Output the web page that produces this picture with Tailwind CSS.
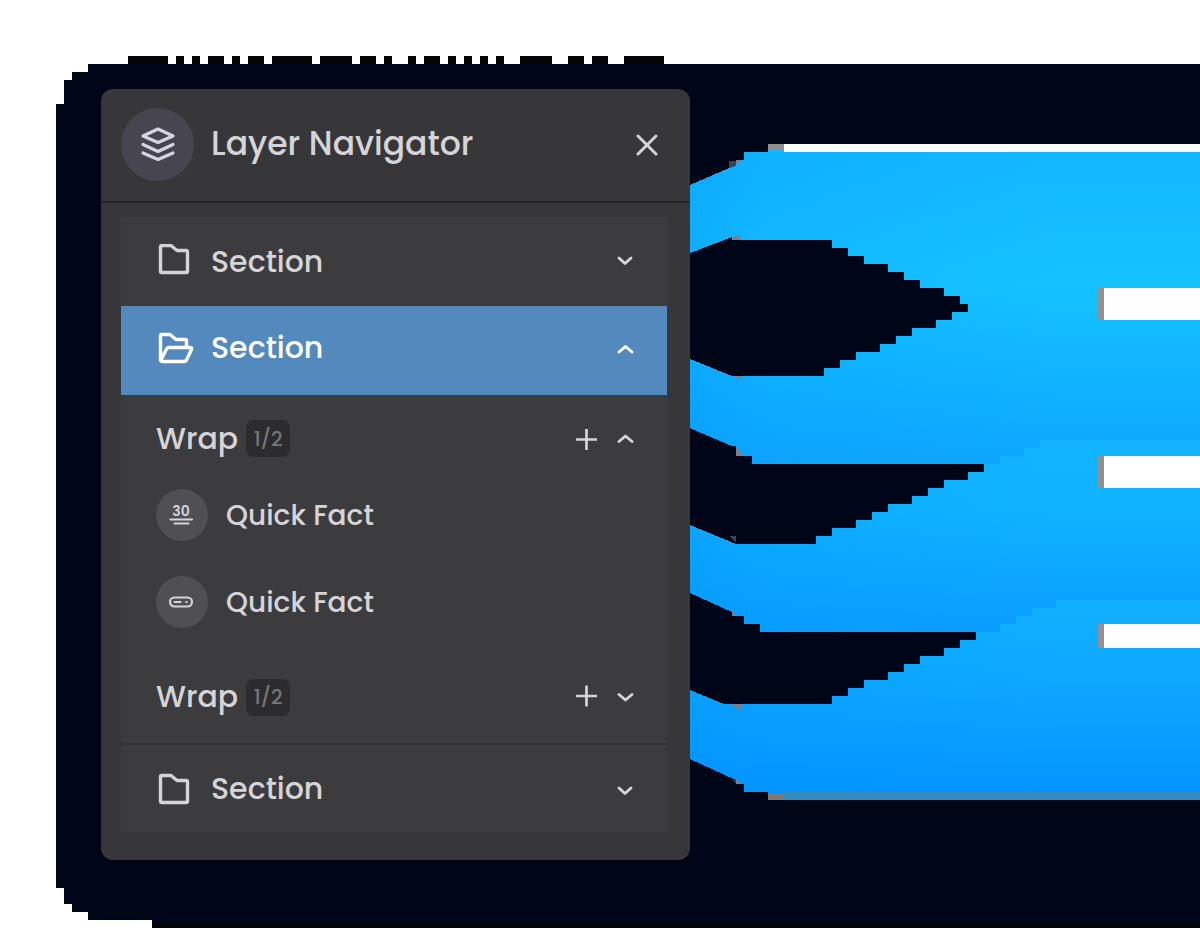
<!DOCTYPE html>
<html lang="en">
<head>
<meta charset="utf-8">
<meta name="viewport" content="width=device-width, initial-scale=1">
<title>Layer Navigator</title>
<script src="https://cdn.jsdelivr.net/npm/@tailwindcss/browser@4"></script>
</head>
<body class="bg-white font-['Poppins','Inter',sans-serif] font-medium text-[#d5d4d8]">
<main class="relative min-h-screen overflow-hidden pt-[89px] pr-4 pb-[90px] pl-[101px]">
  <!-- Decorative backdrop -->
  <svg class="absolute top-0 left-0 h-[950px] w-[2400px] max-w-none" viewBox="0 0 2400 950" aria-hidden="true" shape-rendering="crispEdges">
    <defs>
      <linearGradient id="g1" gradientUnits="userSpaceOnUse" x1="1020" y1="152" x2="1020" y2="464">
        <stop offset="0" stop-color="#13b7ff"/><stop offset=".42" stop-color="#15c2ff"/><stop offset="1" stop-color="#0da6ff"/>
      </linearGradient>
      <linearGradient id="g2" gradientUnits="userSpaceOnUse" x1="1000" y1="440" x2="1000" y2="632">
        <stop offset="0" stop-color="#12b4ff"/><stop offset=".35" stop-color="#10b3ff"/><stop offset="1" stop-color="#099dff"/>
      </linearGradient>
      <linearGradient id="g3" gradientUnits="userSpaceOnUse" x1="1000" y1="600" x2="1000" y2="792">
        <stop offset="0" stop-color="#11b0ff"/><stop offset=".4" stop-color="#0da8ff"/><stop offset="1" stop-color="#0494ff"/>
      </linearGradient>
      <linearGradient id="shade" gradientUnits="userSpaceOnUse" x1="690" y1="0" x2="1060" y2="0">
        <stop offset="0" stop-color="#0090f8" stop-opacity=".34"/><stop offset=".2" stop-color="#0094ff" stop-opacity=".18"/><stop offset="1" stop-color="#0098ff" stop-opacity="0"/>
      </linearGradient>
    </defs>
    <path fill="#000517" d="M88 64H2400V928H152V920H88V912H72V904H64V888H56V104H64V80H72V72H88Z"/>
    <path fill="#050505" d="M128 56h40v8h-40zM176 56h8v8h-8zM192 56h8v8h-8zM208 56h16v8h-16zM232 56h8v8h-8zM248 56h16v8h-16zM272 56h40v8h-40zM320 56h32v8h-32zM360 56h16v8h-16zM384 56h8v8h-8zM408 56h8v8h-8zM424 56h16v8h-16zM448 56h8v8h-8zM464 56h8v8h-8zM480 56h8v8h-8zM496 56h8v8h-8zM520 56h32v8h-32zM568 56h16v8h-16zM592 56h16v8h-16zM624 56h40v8h-40zM152 924H2400v4H152z"/>
    <path fill="url(#g1)" d="M690 185L736 165V160H744V152H2400V464H690Z"/>
    <path fill="url(#g2)" d="M690 464H1000V456H1024V448H1040V440H2400V632H690Z"/>
    <path fill="url(#g3)" d="M690 632H1000V624H1016V616H1032V608H1056V600H2400V792H744V784H736V780L690 759Z"/>
    <path fill="url(#shade)" d="M690 185L736 165V160H744V152H1060V792H744V784H736V780L690 759Z"/>
    <g fill="#000517">
      <path d="M690 253L732 237V240H832V248H848V256H864V264H888V272H904V280H920V288H944V296H960V304H968V312H952V320H936V328H912V336H896V344H880V352H856V360H840V368H824V376H732L690 359Z"/>
      <path d="M690 428L732 446H736V456H752V464H984V472H968V480H944V488H928V496H912V504H888V512H872V520H856V528H832V536H816V544H736L690 525Z"/>
      <path d="M690 593L732 612V616H744V624H760V632H976V640H960V648H944V656H920V664H904V672H888V680H864V688H848V696H832V704H724L690 690Z"/>
    </g>
    <path fill="#7d7b8d" d="M736 160h6l-6 4zM733 237l7-3v6h-7zM734 376h7v3zM736 448l5 3v5h-5zM732 614v-3l4 2v3zM730 704h11v6zM736 779l5 5h-5z"/>
    <path fill="#3a4454" d="M729 161h7v5l-7 2zM729 536h7v7zM730 778l6 3v3z"/>
    <path fill="#fff" d="M784 144H2400v8H784zM1104 288H2400v32H1104zM1104 456H2400v32H1104zM1104 624H2400v24H1104z"/>
    <path fill="#919191" d="M768 144h16v6h-16zM1098 288h6v32h-6zM1098 456h6v32h-6zM1098 624h6v24h-6z"/>
    <path fill="#13b7ff" d="M768 150h16v2h-16z"/>
    <path fill="#338bc1" d="M784 792H2400v8H784z"/><path fill="#7d7978" d="M768 794h16v6h-16z"/><path fill="#0494ff" d="M768 792h16v2h-16z"/>
  </svg>

  <section aria-labelledby="title" class="relative w-full max-w-[589px] rounded-xl bg-[#373739] pb-7">
    <header class="flex h-[114px] items-center border-b-2 border-[#252527] pr-7 pb-0.5 pl-5">
      <span class="flex size-[73px] items-center justify-center rounded-full bg-[#474550]">
        <svg class="size-9" viewBox="0 0 36 36" fill="none" stroke="#d5d4e0" stroke-width="3.200" stroke-linejoin="round" stroke-linecap="round" aria-hidden="true"><path d="M18 3L33 10L18 16.500L3 10ZM3 18.500L18 25.500L33 18.500M3 27L18 33.500L33 27"/></svg>
      </span>
      <h1 id="title" class="ml-[17px] flex-1 text-[33px] leading-10">Layer Navigator</h1>
      <button type="button" aria-label="Close" class="flex size-8 items-center justify-center">
        <svg class="size-6" viewBox="0 0 24 24" fill="none" stroke="currentColor" stroke-width="3" stroke-linecap="round"><path d="M4 4L22 22M22 4L4 22"/></svg>
      </button>
    </header>

    <div class="mt-3.5 mr-[23px] ml-5 bg-[#3c3c3e] text-[30px] leading-10">
      <button type="button" aria-expanded="false" class="flex h-[89px] w-full items-center pr-7 pl-9 text-left">
        <svg class="mr-4 h-9 w-[38px]" viewBox="0 0 38 36" fill="none" stroke="currentColor" stroke-width="3.400" stroke-linejoin="round" aria-hidden="true"><path d="M5 1.500H14L20 6.500H29Q30.500 6.500 30.500 8V27Q30.500 28.500 29 28.500H5Q3.500 28.500 3.500 27V3Q3.500 1.500 5 1.500Z"/></svg>
        <span class="flex-1">Section</span>
        <svg class="size-7" viewBox="0 0 28 28" fill="none" stroke="currentColor" stroke-width="2.900" stroke-linecap="round" stroke-linejoin="round"><path d="M8 10L14 15.500L20 10"/></svg>
      </button>
      <button type="button" aria-expanded="true" class="flex h-[89px] w-full items-center bg-[#5389bd] pr-7 pb-1.5 pl-9 text-left text-white">
        <svg class="mr-4 h-9 w-[38px]" viewBox="0 0 38 36" fill="none" stroke="currentColor" stroke-width="3.400" stroke-linejoin="round" aria-hidden="true"><path d="M3.500 31V6Q3.500 4.500 5 4.500H13L19 9.500H28Q29.500 9.500 29.500 11V17M4 30L9.500 19Q10.300 17.500 12 17.500H33Q35.500 17.500 34.500 19.500L29.500 30Q28.500 31.500 27 31.500H5Q3.500 31.500 4 30Z"/></svg>
        <span class="flex-1">Section</span>
        <svg class="size-7" viewBox="0 0 28 28" fill="none" stroke="currentColor" stroke-width="2.900" stroke-linecap="round" stroke-linejoin="round"><path d="M8 18L14.500 12.500L21 18"/></svg>
      </button>

      <div class="flex h-[89px] items-center pr-7 pb-0.5 pl-[35px]">
        <h2>Wrap</h2>
        <span class="ml-2 flex h-[37px] w-11 items-center justify-center rounded-lg bg-[#2c2c2e] text-xl text-[#77767a]">1/2</span>
        <button type="button" aria-label="Add" class="ml-auto flex size-7 items-center justify-center">
          <svg class="size-6" viewBox="0 0 24 24" fill="none" stroke="currentColor" stroke-width="2.700"><path d="M12.500 2V23M2 12.500H23"/></svg>
        </button>
        <button type="button" aria-label="Collapse" aria-expanded="true" class="ml-[11px] flex size-7 items-center justify-center">
          <svg class="size-7" viewBox="0 0 28 28" fill="none" stroke="currentColor" stroke-width="2.900" stroke-linecap="round" stroke-linejoin="round"><path d="M8 16.500L14.500 11L21 16.500"/></svg>
        </button>
      </div>
      <ul class="flex flex-col gap-[35px] pt-[5px] pb-[25px] pl-[35px] text-[28px]">
        <li class="flex items-center gap-[18px]">
          <span class="flex size-[52px] items-center justify-center rounded-full bg-[#504f54]">
            <svg class="size-7" viewBox="0 0 28 28" fill="none" stroke="currentColor" stroke-width="2.200" stroke-linecap="round" aria-hidden="true"><text x="13" y="15" text-anchor="middle" font-size="14" font-weight="600" fill="currentColor" stroke="none">30</text><path d="M2.500 18.500H24M6.500 22.500H20.500"/></svg>
          </span>
          <span class="pt-0.5">Quick Fact</span>
        </li>
        <li class="flex items-center gap-[18px]">
          <span class="flex size-[52px] items-center justify-center rounded-full bg-[#504f54]">
            <svg class="size-7" viewBox="0 0 28 28" fill="none" stroke="currentColor" stroke-width="2.200" stroke-linecap="round" aria-hidden="true"><rect x="2" y="9.500" width="22" height="9" rx="4.500"/><path d="M6.500 14H12.500M18.300 14H18.700"/></svg>
          </span>
          <span class="pt-0.5">Quick Fact</span>
        </li>
      </ul>
      <div class="flex h-[90px] items-center pr-7 pb-0.5 pl-[35px]">
        <h2>Wrap</h2>
        <span class="ml-2 flex h-[37px] w-11 items-center justify-center rounded-lg bg-[#2c2c2e] text-xl text-[#77767a]">1/2</span>
        <button type="button" aria-label="Add" class="ml-auto flex size-7 items-center justify-center">
          <svg class="size-6" viewBox="0 0 24 24" fill="none" stroke="currentColor" stroke-width="2.700"><path d="M12.500 .5V21.500M2 11H23"/></svg>
        </button>
        <button type="button" aria-label="Expand" aria-expanded="false" class="ml-[11px] flex size-7 items-center justify-center">
          <svg class="size-7" viewBox="0 0 28 28" fill="none" stroke="currentColor" stroke-width="2.900" stroke-linecap="round" stroke-linejoin="round"><path d="M8 11.500L14.500 17L21 11.500"/></svg>
        </button>
      </div>
      <button type="button" aria-expanded="false" class="flex h-[89px] w-full items-center border-t-2 border-[#323234] pr-7 pl-9 text-left">
        <svg class="mr-4 h-9 w-[38px]" viewBox="0 0 38 36" fill="none" stroke="currentColor" stroke-width="3.400" stroke-linejoin="round" aria-hidden="true"><path d="M5 4.500H14L20 9.500H29Q30.500 9.500 30.500 11V30Q30.500 31.500 29 31.500H5Q3.500 31.500 3.500 30V6Q3.500 4.500 5 4.500Z"/></svg>
        <span class="flex-1">Section</span>
        <svg class="size-7" viewBox="0 0 28 28" fill="none" stroke="currentColor" stroke-width="2.900" stroke-linecap="round" stroke-linejoin="round"><path d="M8 13L14 18.500L20 13"/></svg>
      </button>
    </div>
  </section>
</main>
</body>
</html>
